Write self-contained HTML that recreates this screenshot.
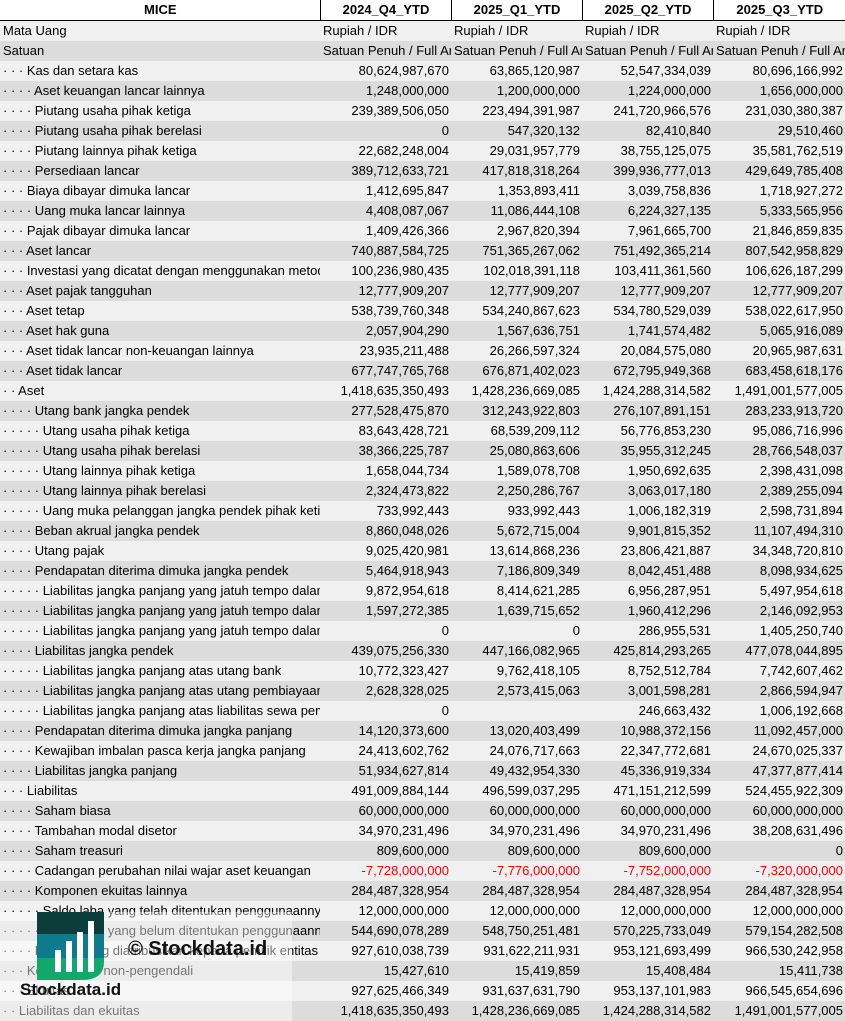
<!DOCTYPE html>
<html><head><meta charset="utf-8"><style>
body{margin:0;width:845px;height:1021px;overflow:hidden;background:#fff;font-family:"Liberation Sans",sans-serif;font-size:13px;color:#000}
table{border-collapse:collapse;table-layout:fixed;width:845px}
td{height:20px;padding:0 2px 0 3px;white-space:nowrap;overflow:hidden;line-height:20px}
td.n{text-align:right}
td.t{text-align:left;overflow:hidden;text-overflow:clip}
tr.h td{font-weight:bold;text-align:center;border-bottom:1.5px solid #000;border-left:1px solid #000;height:19px;background:#fff}
tr.h td:first-child{border-left:none}
tbody tr:nth-child(odd){background:#f0f0f0}
tbody tr:nth-child(even){background:#dcdcdc}
.r{color:#f00}
.wm{position:absolute;left:0;top:912px;width:292px;height:109px;background:rgba(255,255,255,0.45)}
</style></head><body>
<table>
<colgroup><col style="width:320px"><col style="width:131px"><col style="width:131px"><col style="width:131px"><col style="width:132px"></colgroup>
<thead><tr class="h"><td>MICE</td><td>2024_Q4_YTD</td><td>2025_Q1_YTD</td><td>2025_Q2_YTD</td><td>2025_Q3_YTD</td></tr></thead>
<tbody>
<tr><td>Mata Uang</td><td class="t">Rupiah / IDR</td><td class="t">Rupiah / IDR</td><td class="t">Rupiah / IDR</td><td class="t">Rupiah / IDR</td></tr>
<tr><td>Satuan</td><td class="t">Satuan Penuh / Full Amount</td><td class="t">Satuan Penuh / Full Amount</td><td class="t">Satuan Penuh / Full Amount</td><td class="t">Satuan Penuh / Full Amount</td></tr>
<tr><td>· · · Kas dan setara kas</td><td class="n">80,624,987,670</td><td class="n">63,865,120,987</td><td class="n">52,547,334,039</td><td class="n">80,696,166,992</td></tr>
<tr><td>· · · · Aset keuangan lancar lainnya</td><td class="n">1,248,000,000</td><td class="n">1,200,000,000</td><td class="n">1,224,000,000</td><td class="n">1,656,000,000</td></tr>
<tr><td>· · · · Piutang usaha pihak ketiga</td><td class="n">239,389,506,050</td><td class="n">223,494,391,987</td><td class="n">241,720,966,576</td><td class="n">231,030,380,387</td></tr>
<tr><td>· · · · Piutang usaha pihak berelasi</td><td class="n">0</td><td class="n">547,320,132</td><td class="n">82,410,840</td><td class="n">29,510,460</td></tr>
<tr><td>· · · · Piutang lainnya pihak ketiga</td><td class="n">22,682,248,004</td><td class="n">29,031,957,779</td><td class="n">38,755,125,075</td><td class="n">35,581,762,519</td></tr>
<tr><td>· · · · Persediaan lancar</td><td class="n">389,712,633,721</td><td class="n">417,818,318,264</td><td class="n">399,936,777,013</td><td class="n">429,649,785,408</td></tr>
<tr><td>· · · Biaya dibayar dimuka lancar</td><td class="n">1,412,695,847</td><td class="n">1,353,893,411</td><td class="n">3,039,758,836</td><td class="n">1,718,927,272</td></tr>
<tr><td>· · · · Uang muka lancar lainnya</td><td class="n">4,408,087,067</td><td class="n">11,086,444,108</td><td class="n">6,224,327,135</td><td class="n">5,333,565,956</td></tr>
<tr><td>· · · Pajak dibayar dimuka lancar</td><td class="n">1,409,426,366</td><td class="n">2,967,820,394</td><td class="n">7,961,665,700</td><td class="n">21,846,859,835</td></tr>
<tr><td>· · · Aset lancar</td><td class="n">740,887,584,725</td><td class="n">751,365,267,062</td><td class="n">751,492,365,214</td><td class="n">807,542,958,829</td></tr>
<tr><td>· · · Investasi yang dicatat dengan menggunakan metode ekuitas</td><td class="n">100,236,980,435</td><td class="n">102,018,391,118</td><td class="n">103,411,361,560</td><td class="n">106,626,187,299</td></tr>
<tr><td>· · · Aset pajak tangguhan</td><td class="n">12,777,909,207</td><td class="n">12,777,909,207</td><td class="n">12,777,909,207</td><td class="n">12,777,909,207</td></tr>
<tr><td>· · · Aset tetap</td><td class="n">538,739,760,348</td><td class="n">534,240,867,623</td><td class="n">534,780,529,039</td><td class="n">538,022,617,950</td></tr>
<tr><td>· · · Aset hak guna</td><td class="n">2,057,904,290</td><td class="n">1,567,636,751</td><td class="n">1,741,574,482</td><td class="n">5,065,916,089</td></tr>
<tr><td>· · · Aset tidak lancar non-keuangan lainnya</td><td class="n">23,935,211,488</td><td class="n">26,266,597,324</td><td class="n">20,084,575,080</td><td class="n">20,965,987,631</td></tr>
<tr><td>· · · Aset tidak lancar</td><td class="n">677,747,765,768</td><td class="n">676,871,402,023</td><td class="n">672,795,949,368</td><td class="n">683,458,618,176</td></tr>
<tr><td>· · Aset</td><td class="n">1,418,635,350,493</td><td class="n">1,428,236,669,085</td><td class="n">1,424,288,314,582</td><td class="n">1,491,001,577,005</td></tr>
<tr><td>· · · · Utang bank jangka pendek</td><td class="n">277,528,475,870</td><td class="n">312,243,922,803</td><td class="n">276,107,891,151</td><td class="n">283,233,913,720</td></tr>
<tr><td>· · · · · Utang usaha pihak ketiga</td><td class="n">83,643,428,721</td><td class="n">68,539,209,112</td><td class="n">56,776,853,230</td><td class="n">95,086,716,996</td></tr>
<tr><td>· · · · · Utang usaha pihak berelasi</td><td class="n">38,366,225,787</td><td class="n">25,080,863,606</td><td class="n">35,955,312,245</td><td class="n">28,766,548,037</td></tr>
<tr><td>· · · · · Utang lainnya pihak ketiga</td><td class="n">1,658,044,734</td><td class="n">1,589,078,708</td><td class="n">1,950,692,635</td><td class="n">2,398,431,098</td></tr>
<tr><td>· · · · · Utang lainnya pihak berelasi</td><td class="n">2,324,473,822</td><td class="n">2,250,286,767</td><td class="n">3,063,017,180</td><td class="n">2,389,255,094</td></tr>
<tr><td>· · · · · Uang muka pelanggan jangka pendek pihak ketiga</td><td class="n">733,992,443</td><td class="n">933,992,443</td><td class="n">1,006,182,319</td><td class="n">2,598,731,894</td></tr>
<tr><td>· · · · Beban akrual jangka pendek</td><td class="n">8,860,048,026</td><td class="n">5,672,715,004</td><td class="n">9,901,815,352</td><td class="n">11,107,494,310</td></tr>
<tr><td>· · · · Utang pajak</td><td class="n">9,025,420,981</td><td class="n">13,614,868,236</td><td class="n">23,806,421,887</td><td class="n">34,348,720,810</td></tr>
<tr><td>· · · · Pendapatan diterima dimuka jangka pendek</td><td class="n">5,464,918,943</td><td class="n">7,186,809,349</td><td class="n">8,042,451,488</td><td class="n">8,098,934,625</td></tr>
<tr><td>· · · · · Liabilitas jangka panjang yang jatuh tempo dalam satu tahun</td><td class="n">9,872,954,618</td><td class="n">8,414,621,285</td><td class="n">6,956,287,951</td><td class="n">5,497,954,618</td></tr>
<tr><td>· · · · · Liabilitas jangka panjang yang jatuh tempo dalam satu tahun</td><td class="n">1,597,272,385</td><td class="n">1,639,715,652</td><td class="n">1,960,412,296</td><td class="n">2,146,092,953</td></tr>
<tr><td>· · · · · Liabilitas jangka panjang yang jatuh tempo dalam satu tahun</td><td class="n">0</td><td class="n">0</td><td class="n">286,955,531</td><td class="n">1,405,250,740</td></tr>
<tr><td>· · · · Liabilitas jangka pendek</td><td class="n">439,075,256,330</td><td class="n">447,166,082,965</td><td class="n">425,814,293,265</td><td class="n">477,078,044,895</td></tr>
<tr><td>· · · · · Liabilitas jangka panjang atas utang bank</td><td class="n">10,772,323,427</td><td class="n">9,762,418,105</td><td class="n">8,752,512,784</td><td class="n">7,742,607,462</td></tr>
<tr><td>· · · · · Liabilitas jangka panjang atas utang pembiayaan</td><td class="n">2,628,328,025</td><td class="n">2,573,415,063</td><td class="n">3,001,598,281</td><td class="n">2,866,594,947</td></tr>
<tr><td>· · · · · Liabilitas jangka panjang atas liabilitas sewa pembiayaan</td><td class="n">0</td><td class="n"></td><td class="n">246,663,432</td><td class="n">1,006,192,668</td></tr>
<tr><td>· · · · Pendapatan diterima dimuka jangka panjang</td><td class="n">14,120,373,600</td><td class="n">13,020,403,499</td><td class="n">10,988,372,156</td><td class="n">11,092,457,000</td></tr>
<tr><td>· · · · Kewajiban imbalan pasca kerja jangka panjang</td><td class="n">24,413,602,762</td><td class="n">24,076,717,663</td><td class="n">22,347,772,681</td><td class="n">24,670,025,337</td></tr>
<tr><td>· · · · Liabilitas jangka panjang</td><td class="n">51,934,627,814</td><td class="n">49,432,954,330</td><td class="n">45,336,919,334</td><td class="n">47,377,877,414</td></tr>
<tr><td>· · · Liabilitas</td><td class="n">491,009,884,144</td><td class="n">496,599,037,295</td><td class="n">471,151,212,599</td><td class="n">524,455,922,309</td></tr>
<tr><td>· · · · Saham biasa</td><td class="n">60,000,000,000</td><td class="n">60,000,000,000</td><td class="n">60,000,000,000</td><td class="n">60,000,000,000</td></tr>
<tr><td>· · · · Tambahan modal disetor</td><td class="n">34,970,231,496</td><td class="n">34,970,231,496</td><td class="n">34,970,231,496</td><td class="n">38,208,631,496</td></tr>
<tr><td>· · · · Saham treasuri</td><td class="n">809,600,000</td><td class="n">809,600,000</td><td class="n">809,600,000</td><td class="n">0</td></tr>
<tr><td>· · · · Cadangan perubahan nilai wajar aset keuangan</td><td class="n r">-7,728,000,000</td><td class="n r">-7,776,000,000</td><td class="n r">-7,752,000,000</td><td class="n r">-7,320,000,000</td></tr>
<tr><td>· · · · Komponen ekuitas lainnya</td><td class="n">284,487,328,954</td><td class="n">284,487,328,954</td><td class="n">284,487,328,954</td><td class="n">284,487,328,954</td></tr>
<tr><td>· · · · · Saldo laba yang telah ditentukan penggunaannya</td><td class="n">12,000,000,000</td><td class="n">12,000,000,000</td><td class="n">12,000,000,000</td><td class="n">12,000,000,000</td></tr>
<tr><td>· · · · · Saldo laba yang belum ditentukan penggunaannya</td><td class="n">544,690,078,289</td><td class="n">548,750,251,481</td><td class="n">570,225,733,049</td><td class="n">579,154,282,508</td></tr>
<tr><td>· · · · Ekuitas yang diatribusikan kepada pemilik entitas induk</td><td class="n">927,610,038,739</td><td class="n">931,622,211,931</td><td class="n">953,121,693,499</td><td class="n">966,530,242,958</td></tr>
<tr><td>· · · Kepentingan non-pengendali</td><td class="n">15,427,610</td><td class="n">15,419,859</td><td class="n">15,408,484</td><td class="n">15,411,738</td></tr>
<tr><td>· · · Ekuitas</td><td class="n">927,625,466,349</td><td class="n">931,637,631,790</td><td class="n">953,137,101,983</td><td class="n">966,545,654,696</td></tr>
<tr><td>· · Liabilitas dan ekuitas</td><td class="n">1,418,635,350,493</td><td class="n">1,428,236,669,085</td><td class="n">1,424,288,314,582</td><td class="n">1,491,001,577,005</td></tr>
</tbody></table>
<div class="wm"></div>
<svg style="position:absolute;left:37px;top:912px" width="67" height="68" viewBox="0 0 67 68">
<path d="M0 0H67V22H0Z" fill="#0b3d3a"/>
<path d="M0 22H67V46H0Z" fill="#0e7b8c"/>
<path d="M0 46H67V50Q67 68 45 68H0Z" fill="#13a86b"/>
<rect x="18" y="38" width="6" height="22" fill="#fff"/><rect x="29" y="29" width="6" height="31" fill="#fff"/><rect x="40" y="20" width="6" height="40" fill="#fff"/><rect x="51" y="9" width="6" height="51" fill="#fff"/>
</svg>
<div style="position:absolute;left:128px;top:938px;font-weight:bold;font-size:20px;color:#111">© Stockdata.id</div>
<div style="position:absolute;left:20px;top:980px;font-weight:bold;font-size:17px;color:#111">Stockdata.id</div>
</body></html>
